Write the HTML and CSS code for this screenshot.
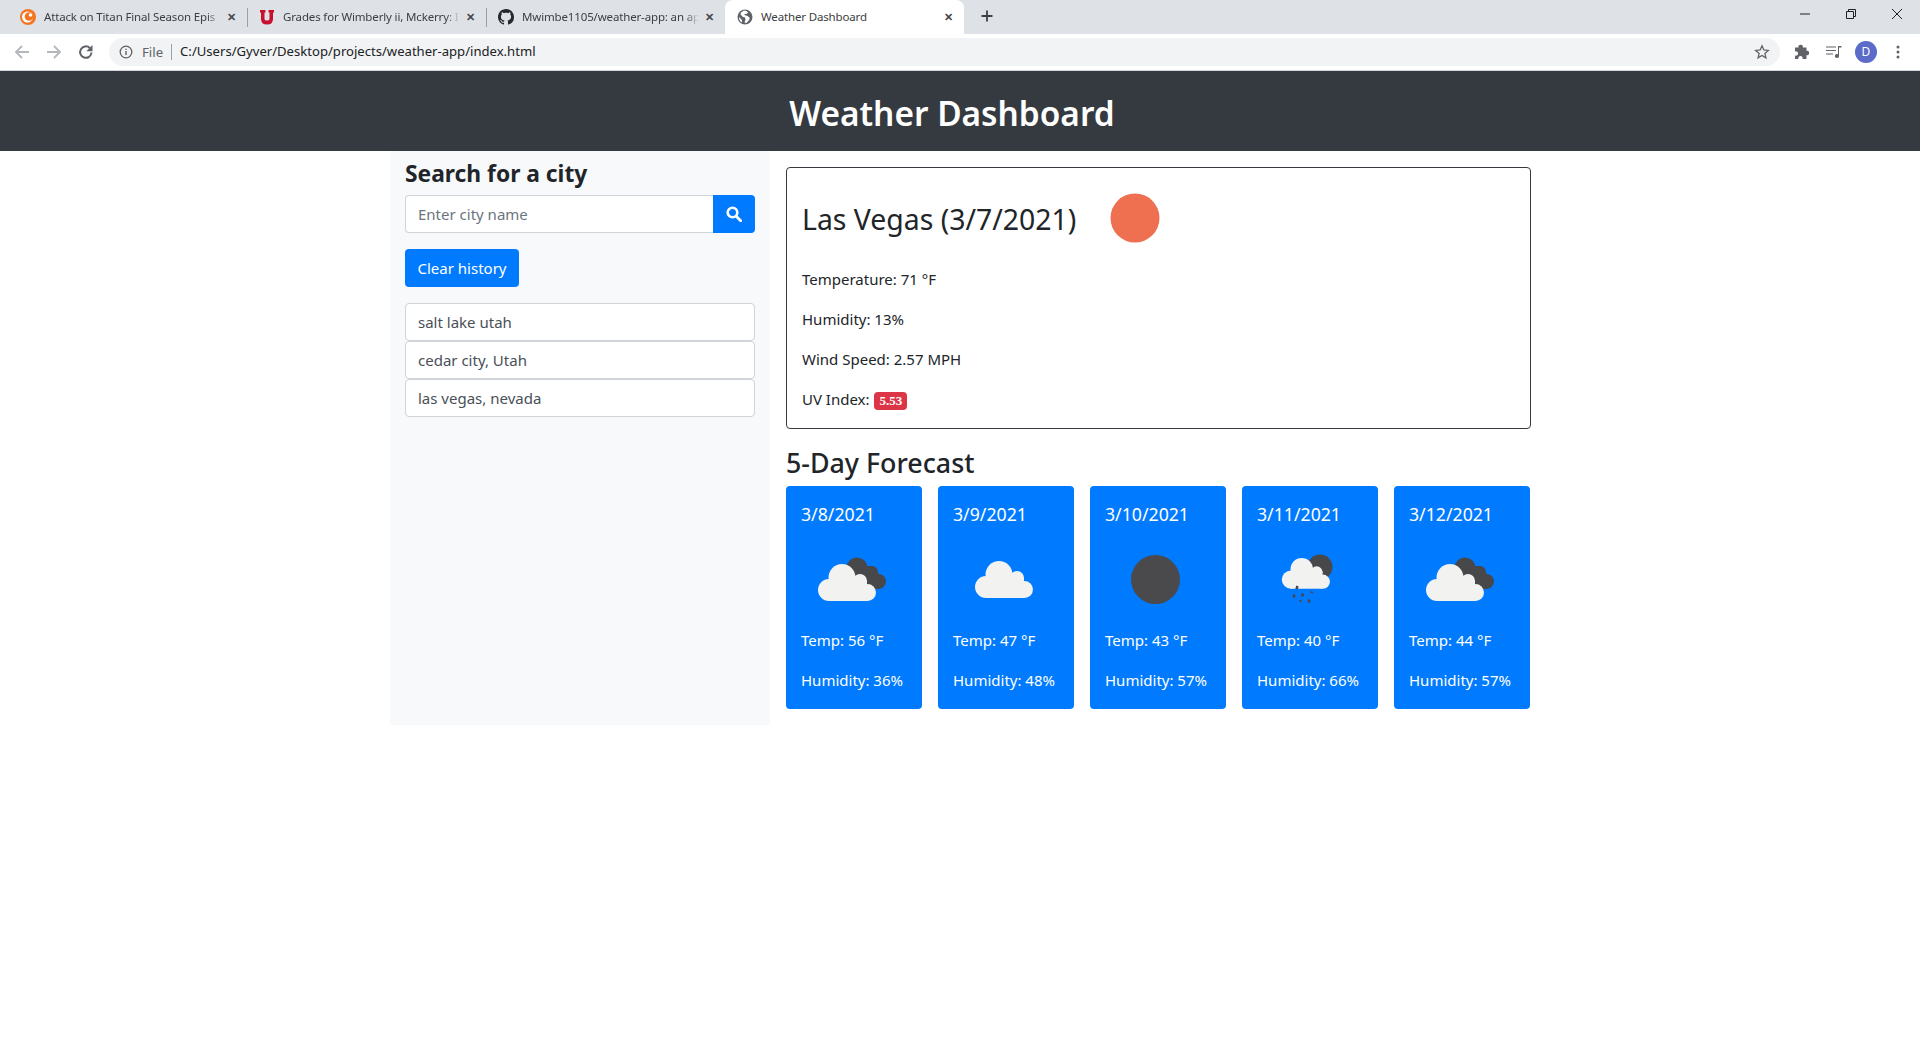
FILE: index.html
```html
<!DOCTYPE html>
<html lang="en">
<head>
<meta charset="utf-8">
<title>Weather Dashboard</title>
<link rel="stylesheet" href="styles.css">
</head>
<body>
<svg class="defs" width="0" height="0" aria-hidden="true">
  <defs>
    <g id="cloud-light" fill="#f2f2f1">
      <circle cx="28" cy="60" r="11"/>
      <circle cx="41" cy="47.500" r="13.500"/>
      <circle cx="59" cy="51" r="7"/>
      <circle cx="66.500" cy="62.500" r="8.500"/>
      <rect x="28" y="50" width="38" height="21"/>
    </g>
    <g id="cloud-dark" fill="#48484a">
      <circle cx="56" cy="38" r="10.500"/>
      <circle cx="71" cy="42" r="6"/>
      <circle cx="77.500" cy="51.500" r="7.500"/>
      <path d="M50 36h21l7 8v15H60z"/>
    </g>
    <g id="cloud-few">
      <use href="#cloud-dark"/>
      <use href="#cloud-light"/>
    </g>
  </defs>
</svg>

<div class="chrome">
  <div class="tabstrip">
    <div class="tab">
      <svg class="fav" viewBox="0 0 16 16"><circle cx="8" cy="8" r="8" fill="#f47521"/><circle cx="7.500" cy="8" r="5.500" fill="#fff"/><circle cx="9" cy="7.500" r="4.300" fill="#f47521"/><circle cx="10.500" cy="6" r="1.800" fill="#fff"/></svg>
      <span class="tab-title">Attack on Titan Final Season Epis</span>
      <span class="tab-x">✕</span>
    </div>
    <div class="tab">
      <svg class="fav" viewBox="0 0 16 16"><path d="M1 1h5.500v2.500H5.500v6.500q0 1.500 2.500 1.500t2.500-1.500V3.500H9.500V1H15v2.500h-1v6.500q0 5.500-6 5.500t-6-5.500V3.500H1z" fill="#c8102e"/></svg>
      <span class="tab-title">Grades for Wimberly ii, Mckerry: I</span>
      <span class="tab-x">✕</span>
    </div>
    <div class="tab">
      <svg class="fav" viewBox="0 0 16 16"><path fill="#24292e" d="M8 0C3.580 0 0 3.580 0 8c0 3.540 2.290 6.530 5.470 7.590.4.070.55-.17.55-.38 0-.19-.01-.82-.01-1.490-2.010.37-2.530-.49-2.690-.94-.09-.23-.48-.94-.82-1.130-.28-.15-.68-.52-.01-.53.630-.01 1.080.58 1.230.82.720 1.210 1.870.87 2.330.66.070-.52.280-.87.510-1.070-1.780-.2-3.640-.89-3.640-3.950 0-.87.310-1.590.82-2.150-.08-.2-.36-1.020.08-2.120 0 0 .67-.21 2.200.82.640-.18 1.320-.27 2-.27s1.360.09 2 .27c1.530-1.040 2.200-.82 2.200-.82.44 1.100.16 1.920.08 2.120.51.560.82 1.270.82 2.150 0 3.070-1.870 3.750-3.650 3.950.29.250.54.730.54 1.480 0 1.070-.01 1.930-.01 2.200 0 .21.150.46.550.38A8.010 8.010 0 0 0 16 8c0-4.420-3.580-8-8-8z"/></svg>
      <span class="tab-title">Mwimbe1105/weather-app: an ap</span>
      <span class="tab-x">✕</span>
    </div>
    <div class="tab tab-active">
      <svg class="fav" viewBox="0 0 16 16"><circle cx="8" cy="8" r="7.500" fill="#5f6368"/><path d="M7 1.500 4 3.500l-.5 2L6 8l2 .5.500 2-1 3 2 .5 3-3.500v-2l-2-1.500-3-1V5h2l1.500-1.500L9.500 2zM2 8l3 3v2.500A6 6 0 0 1 2 8z" fill="#fff"/></svg>
      <span class="tab-title tab-title-full">Weather Dashboard</span>
      <span class="tab-x">✕</span>
    </div>
    <svg class="new-tab" viewBox="0 0 16 16"><path d="M8 2.500v11M2.500 8h11" stroke="#3c4043" stroke-width="1.800" fill="none"/></svg>
    <div class="window-controls">
      <svg width="12" height="12" viewBox="0 0 12 12"><path d="M1 6h10" stroke="#202124" fill="none"/></svg>
      <svg width="12" height="12" viewBox="0 0 12 12"><path d="M1.500 3.500h7v7h-7zM3.500 3.500v-2h7v7h-2" stroke="#202124" fill="none"/></svg>
      <svg width="12" height="12" viewBox="0 0 12 12"><path d="M1 1l10 10M11 1 1 11" stroke="#202124" fill="none"/></svg>
    </div>
  </div>
  <div class="toolbar">
    <svg class="nav-icon" viewBox="0 0 16 16"><path d="M15 8H2M8 2 2 8l6 6" stroke="#b4b7bb" stroke-width="1.800" fill="none"/></svg>
    <svg class="nav-icon" viewBox="0 0 16 16"><path d="M1 8h13M8 2l6 6-6 6" stroke="#b4b7bb" stroke-width="1.800" fill="none"/></svg>
    <svg class="nav-icon" viewBox="0 0 16 16"><path d="M13.500 8.500a5.700 5.700 0 1 1-1.700-4.500" stroke="#5f6368" stroke-width="2" fill="none"/><path d="M14.500 1v6.200H8.300z" fill="#5f6368"/></svg>
    <div class="omnibox">
      <svg class="info" viewBox="0 0 14 14"><circle cx="7" cy="7" r="5.800" fill="none" stroke="#5f6368" stroke-width="1.300"/><path d="M7 6v4M7 3.800v1.300" stroke="#5f6368" stroke-width="1.400"/></svg>
      <span class="scheme">File</span>
      <span class="url">C:/Users/Gyver/Desktop/projects/weather-app/index.html</span>
      <svg class="star" viewBox="0 0 16 16"><path d="m8 1.800 1.800 4.200 4.500.4-3.400 3 1 4.400L8 11.500l-3.900 2.300 1-4.400-3.400-3 4.500-.4z" fill="none" stroke="#5f6368" stroke-width="1.300"/></svg>
    </div>
    <div class="toolbar-actions">
      <svg class="act" viewBox="0 0 16 16"><path d="M1 3.500h3.500a2.200 2.200 0 1 1 4.300 0h3.700v3.300a2.200 2.200 0 1 1 0 4.300V15H8.500a2.200 2.200 0 1 0-4 0H1v-3.500a2.200 2.200 0 1 0 0-4z" fill="#5f6368"/></svg>
      <svg class="act" viewBox="0 0 16 16"><path d="M0 3h10M0 6.500h10M0 10h7" stroke="#5f6368" stroke-width="1.200" fill="none"/><path d="M12 2h3.500v1.500H13V12a2 2 0 1 1-1-1.700z" fill="#5f6368"/></svg>
      <span class="avatar">D</span>
      <svg class="act" viewBox="0 0 16 16"><circle cx="8" cy="3" r="1.500" fill="#5f6368"/><circle cx="8" cy="8" r="1.500" fill="#5f6368"/><circle cx="8" cy="13" r="1.500" fill="#5f6368"/></svg>
    </div>
  </div>
</div>

<header class="jumbo"><h1>Weather Dashboard</h1></header>

<main class="container">
  <aside class="sidebar">
    <h2 class="side-title">Search for a city</h2>
    <div class="search-group">
      <input class="search-input" type="text" placeholder="Enter city name">
      <button class="search-btn" type="button" aria-label="Search">
        <svg viewBox="0 0 16 16" width="16" height="16"><circle cx="6.500" cy="6.500" r="4.800" fill="none" stroke="#fff" stroke-width="2.600"/><path d="m10.200 10.200 4.500 4.500" stroke="#fff" stroke-width="2.800" stroke-linecap="round"/></svg>
      </button>
    </div>
    <button class="clear-btn" type="button">Clear history</button>
    <ul class="history">
      <li>salt lake utah</li>
      <li>cedar city, Utah</li>
      <li>las vegas, nevada</li>
    </ul>
  </aside>

  <section class="content">
    <div class="today">
      <div class="today-head">
        <h3>Las Vegas (3/7/2021)</h3>
        <svg class="today-icon" viewBox="0 0 100 100"><circle cx="50" cy="50" r="24.500" fill="#ee7050"/></svg>
      </div>
      <p>Temperature: 71 °F</p>
      <p>Humidity: 13%</p>
      <p>Wind Speed: 2.57 MPH</p>
      <p>UV Index: <span class="badge">5.53</span></p>
    </div>

    <h3 class="forecast-title">5-Day Forecast</h3>
    <div class="forecast">
      <article class="day">
        <h5>3/8/2021</h5>
        <svg class="day-icon" viewBox="0 0 100 100"><use href="#cloud-few"/></svg>
        <p>Temp: 56 °F</p>
        <p>Humidity: 36%</p>
      </article>
      <article class="day">
        <h5>3/9/2021</h5>
        <svg class="day-icon" viewBox="0 0 100 100"><use href="#cloud-light" transform="translate(5 -3)"/></svg>
        <p>Temp: 47 °F</p>
        <p>Humidity: 48%</p>
      </article>
      <article class="day">
        <h5>3/10/2021</h5>
        <svg class="day-icon" viewBox="0 0 100 100"><circle cx="50.500" cy="49.500" r="24.500" fill="#4a4a4d"/></svg>
        <p>Temp: 43 °F</p>
        <p>Humidity: 57%</p>
      </article>
      <article class="day">
        <h5>3/11/2021</h5>
        <svg class="day-icon" viewBox="0 0 100 100">
          <circle cx="63" cy="37" r="12.500" fill="#48484a"/>
          <use href="#cloud-light" transform="translate(10.700 -.2) scale(.83)"/>
          <path d="M40.500 56l-1 3M37.500 64.500l-1 3M46 63.500l-1 3M55.200 61.500l-.8 1.500M43.800 70.200l-.6 1.500M52.500 69.500l-1 3" stroke="#48484a" stroke-width="2.500" fill="none"/>
        </svg>
        <p>Temp: 40 °F</p>
        <p>Humidity: 66%</p>
      </article>
      <article class="day">
        <h5>3/12/2021</h5>
        <svg class="day-icon" viewBox="0 0 100 100"><use href="#cloud-few"/></svg>
        <p>Temp: 44 °F</p>
        <p>Humidity: 57%</p>
      </article>
    </div>
  </section>
</main>
</body>
</html>
```

FILE: styles.css
```css
* { box-sizing: border-box; }
html, body { margin: 0; padding: 0; }
body {
  background: #fff;
  color: #212529;
  font-family: "Noto Sans", "Open Sans", "Liberation Sans", sans-serif;
  font-size: 15px;
  line-height: 1.5;
}
h1, h2, h3, h5, p, ul { margin: 0; padding: 0; }
.defs { position: absolute; }

/* Browser chrome */
.chrome { height: 71px; font-size: 12px; color: #3c4043; }
.tabstrip {
  display: flex;
  align-items: center;
  height: 34px;
  background: #dee1e6;
  padding-left: 8px;
}
.tab {
  display: flex;
  align-items: center;
  width: 239px;
  height: 34px;
  padding: 0 8px 0 12px;
  position: relative;
  flex: none;
}
.tab + .tab::before {
  content: "";
  position: absolute;
  left: 0;
  top: 8px;
  height: 19px;
  border-left: 1px solid #9aa0a6;
}
.tab-active {
  background: #fff;
  border-radius: 8px 8px 0 0;
}
.tab-active::before { display: none; }
.fav { width: 16px; height: 16px; flex: none; margin-right: 8px; }
.tab-title {
  flex: 1;
  min-width: 0;
  white-space: nowrap;
  font-size: 11.500px;
  letter-spacing: -.15px;
  mask-image: linear-gradient(to left, transparent 2px, #000 16px);
}
.tab-title-full { mask-image: none; }
.tab-x { width: 16px; flex: none; text-align: center; font-size: 11px; color: #45484c; font-weight: 700; }
.new-tab { width: 16px; height: 16px; flex: none; margin: -2px 0 0 15px; }
.window-controls {
  margin-left: auto;
  display: flex;
  gap: 34px;
  padding-right: 17px;
  align-items: center;
  height: 28px;
  align-self: flex-start;
}
.toolbar {
  display: flex;
  align-items: center;
  height: 37px;
  background: #fff;
  border-bottom: 1px solid #d3d5d8;
  padding-left: 14px;
}
.nav-icon { width: 16px; height: 16px; margin-right: 16px; flex: none; }
.omnibox {
  display: flex;
  align-items: center;
  flex: 1;
  height: 28px;
  margin-left: -1px;
  padding: 0 10px;
  background: #f1f3f4;
  border-radius: 14px;
}
.info { width: 14px; height: 14px; margin-right: 9px; flex: none; }
.scheme {
  color: #5f6368;
  font-size: 13.200px;
  padding-right: 8px;
  border-right: 1px solid #9aa0a6;
  line-height: 16px;
  margin-right: 8px;
}
.url { color: #202124; font-size: 13.100px; }
.star { width: 16px; height: 16px; margin-left: auto; flex: none; }
.toolbar-actions {
  display: flex;
  align-items: center;
  gap: 16px;
  margin-left: 14px;
  padding-right: 14px;
}
.act { width: 16px; height: 16px; flex: none; }
.avatar {
  width: 22px;
  height: 22px;
  margin: 0 -3px;
  border-radius: 50%;
  background: #5b6bc8;
  color: #fff;
  font-size: 12px;
  display: flex;
  align-items: center;
  justify-content: center;
  flex: none;
}

/* Page */
.jumbo {
  background: #343a40;
  color: #fff;
  height: 80px;
  display: flex;
  align-items: center;
  justify-content: center;
  padding-right: 16px;
}
.jumbo h1 { font-size: 33.400px; font-weight: 600; line-height: 1.2; padding-top: 4px; }

.container {
  display: flex;
  width: 1140px;
  margin: 0 auto;
}
.sidebar {
  width: 380px;
  height: 574px;
  flex: none;
  background: #f8f9fa;
  padding: 6px 15px 0;
}
.side-title { font-size: 22.800px; font-weight: 700; line-height: 1.5; height: 38px; }
.search-group { display: flex; height: 38px; margin-bottom: 16px; }
.search-input {
  flex: 1;
  min-width: 0;
  height: 38px;
  padding: 6px 12px;
  border: 1px solid #ced4da;
  border-right: 0;
  border-radius: 4px 0 0 4px;
  background: #fff;
  font: inherit;
  color: #495057;
}
.search-input::placeholder { color: #6c757d; opacity: 1; }
.search-btn {
  width: 42px;
  height: 38px;
  flex: none;
  border: 0;
  border-radius: 0 4px 4px 0;
  background: #007bff;
  padding: 0;
  display: flex;
  align-items: center;
  justify-content: center;
}
.clear-btn {
  display: block;
  height: 38px;
  width: 114px;
  padding: 0;
  border: 0;
  border-radius: 4px;
  background: #007bff;
  color: #fff;
  font: inherit;
  margin-bottom: 16px;
}
.history { list-style: none; }
.history li {
  height: 38px;
  padding: 7px 12px 0;
  border: 1px solid #ced4da;
  border-radius: 4px;
  background: #fff;
  color: #495057;
}

.content { flex: 1; min-width: 0; padding: 16px 0 0 16px; }
.today {
  height: 262px;
  width: 745px;
  border: 1px solid #343a40;
  border-radius: 4px;
  padding: 0 15px;
}
.today-head { display: flex; align-items: center; height: 100px; }
.today-head h3 { font-size: 28.400px; font-weight: 400; line-height: 1.2; padding-top: 2px; }
.today-icon { width: 100px; height: 100px; flex: none; margin-left: 9px; }
.today p { height: 24px; margin-bottom: 16px; }
.badge {
  display: inline-block;
  vertical-align: 0;
  margin-left: 1px;
  background: #dc3545;
  color: #fff;
  font-family: "Liberation Serif", serif;
  font-weight: 700;
  font-size: 13px;
  line-height: 18px;
  height: 18px;
  padding: 0 5px;
  border-radius: 4px;
}
.forecast-title { font-size: 26.800px; font-weight: 500; line-height: 1.2; margin-top: 18px; height: 39px; }
.forecast { display: flex; gap: 16px; }
.day {
  width: 136px;
  height: 223px;
  flex: none;
  background: #007bff;
  color: #fff;
  border-radius: 4px;
  padding: 18px 15px 0;
}
.day h5 { font-size: 17.700px; font-weight: 400; line-height: 1.2; height: 26px; }
.day-icon { display: block; width: 100px; height: 100px; }
.day p { height: 24px; margin-bottom: 16px; white-space: nowrap; }
.day-icon + p { margin-top: -1px; }
```
